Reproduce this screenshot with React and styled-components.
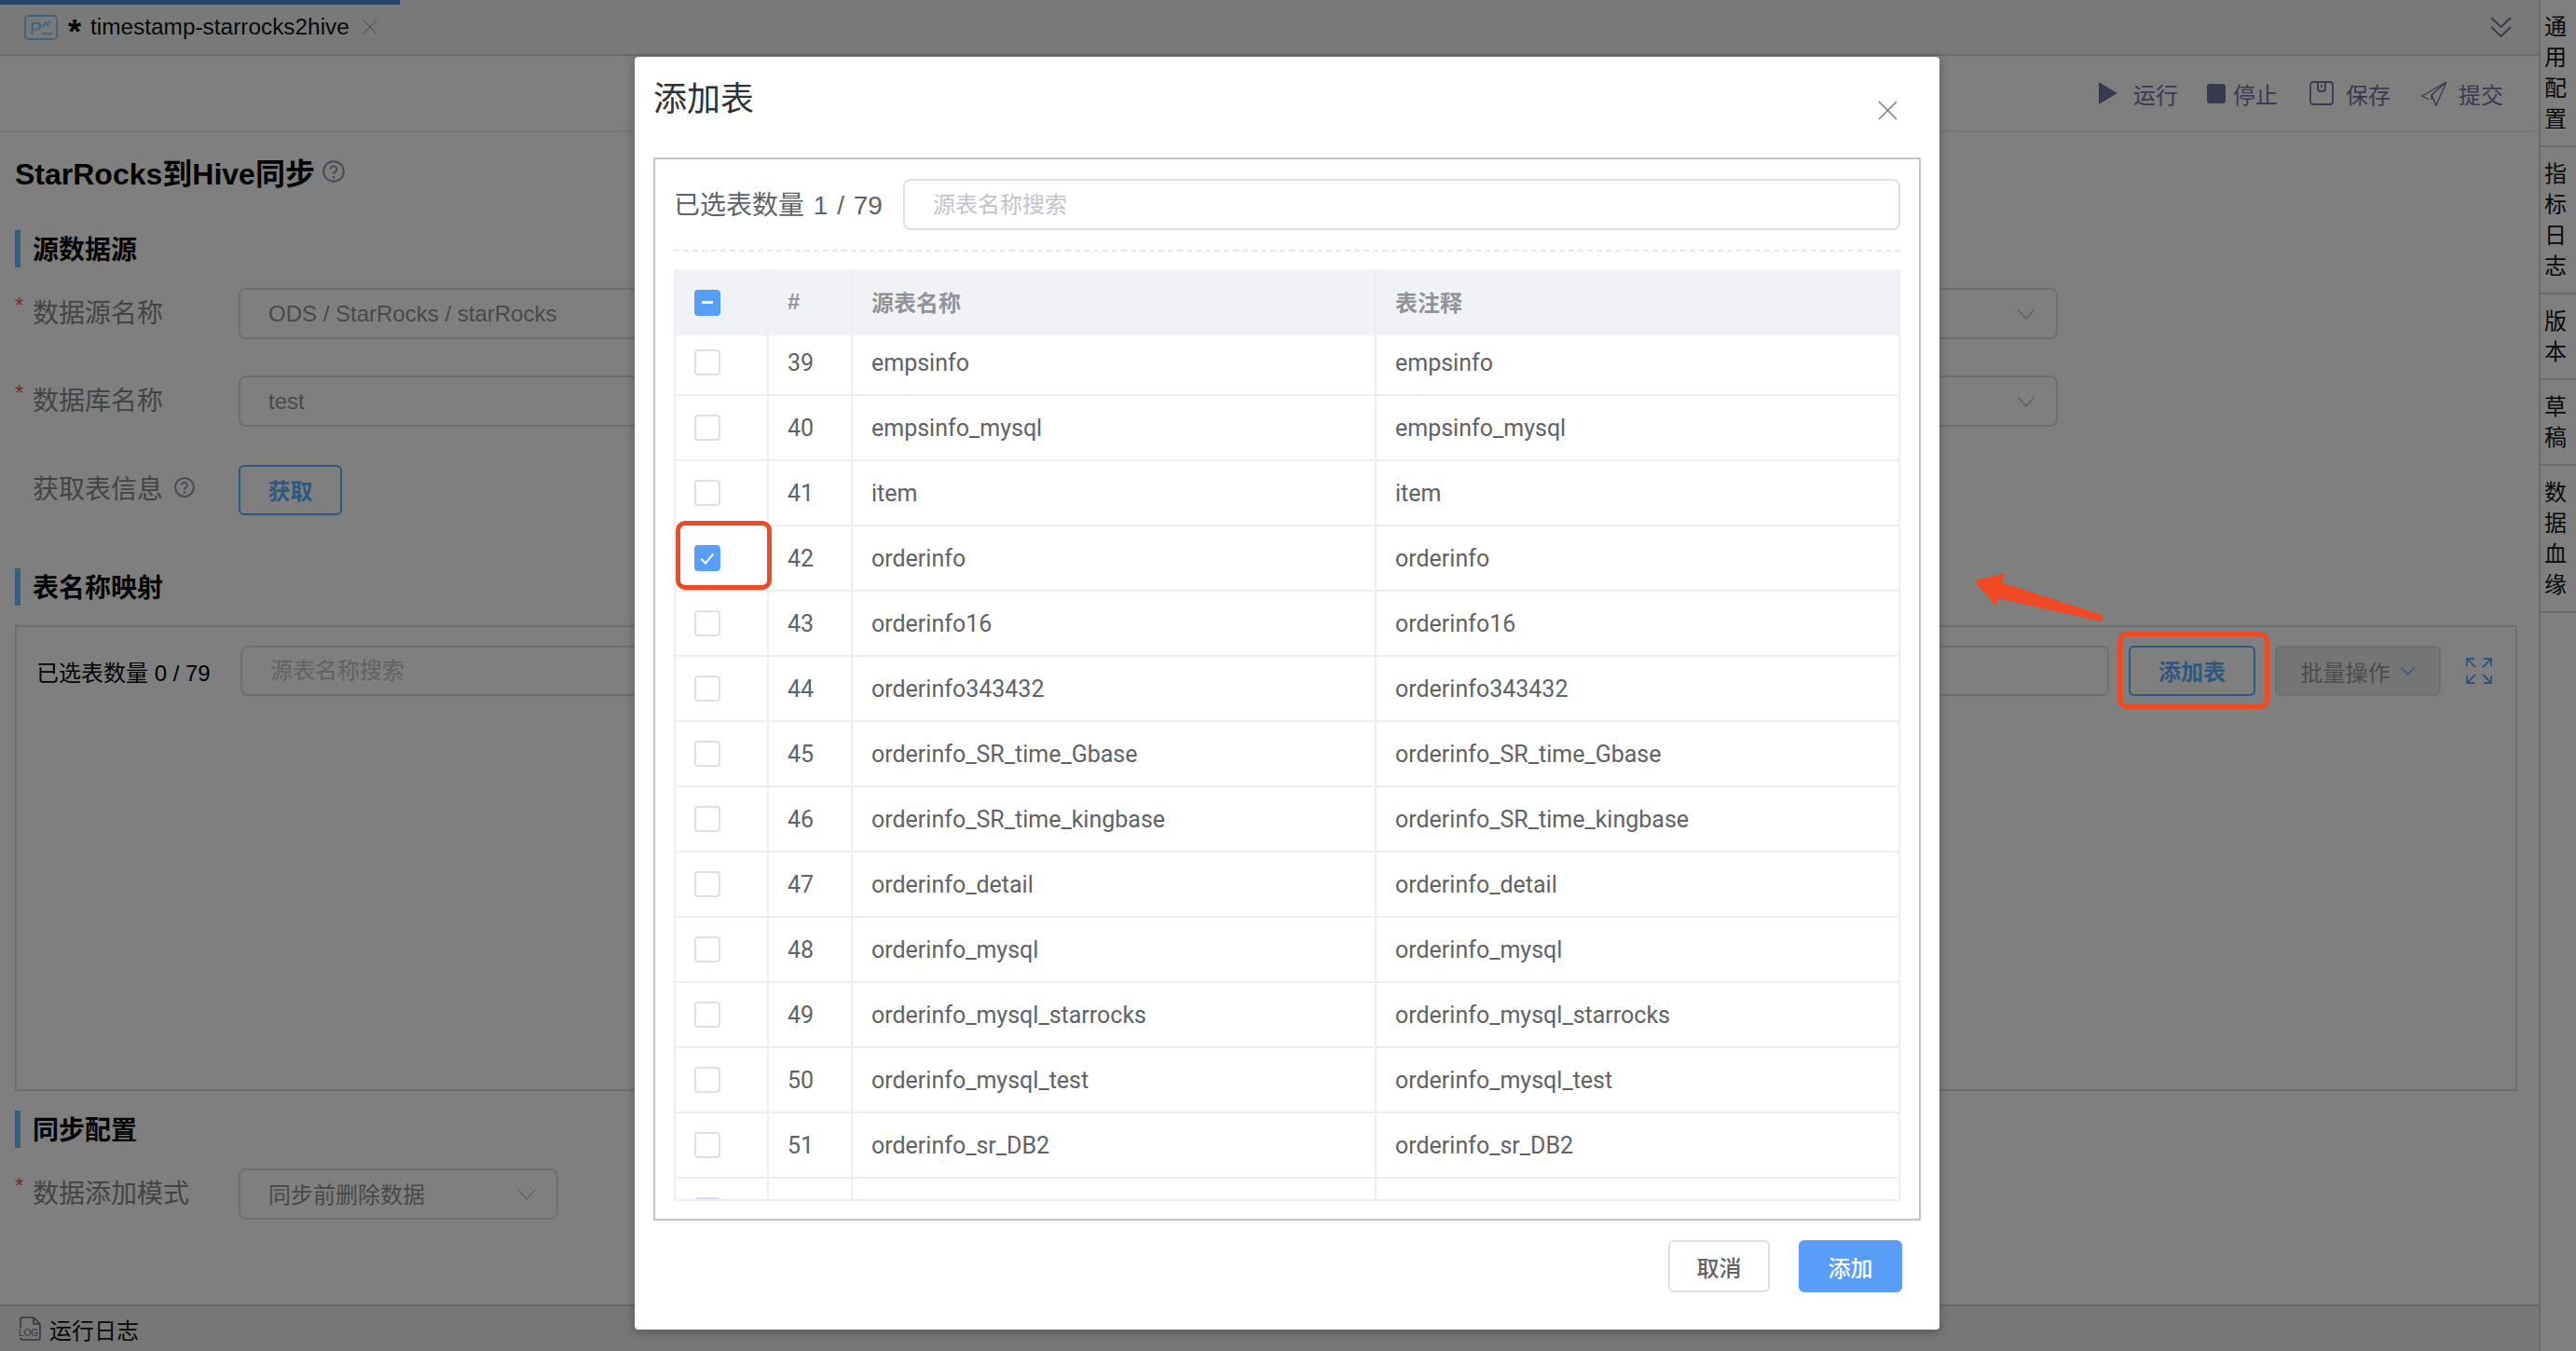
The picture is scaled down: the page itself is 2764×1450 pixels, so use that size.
import React from 'react';
import styled, { createGlobalStyle } from 'styled-components';

const rows = [
  [39, 'empsinfo'],
  [40, 'empsinfo_mysql'],
  [41, 'item'],
  [42, 'orderinfo'],
  [43, 'orderinfo16'],
  [44, 'orderinfo343432'],
  [45, 'orderinfo_SR_time_Gbase'],
  [46, 'orderinfo_SR_time_kingbase'],
  [47, 'orderinfo_detail'],
  [48, 'orderinfo_mysql'],
  [49, 'orderinfo_mysql_starrocks'],
  [50, 'orderinfo_mysql_test'],
  [51, 'orderinfo_sr_DB2'],
  ['', ''],
];

const railItems = ['通用配置', '指标日志', '版本', '草稿', '数据血缘'];

const Chevron = ({ w = 20, h = 12, color = '#c0c4cc' }) => (
  <svg width={w} height={h} viewBox="0 0 20 12" fill="none" preserveAspectRatio="none">
    <path d="M1 1l9 10 9-10" stroke={color} strokeWidth="1.5" />
  </svg>
);

const Help = ({ size, color }) => (
  <svg width={size} height={size} viewBox="0 0 24 24" fill="none">
    <circle cx="12" cy="12" r="10.800" stroke={color} strokeWidth="2" />
    <path d="M8.800 9.400a3.200 3.200 0 1 1 5 2.700c-1.200.8-1.800 1.400-1.800 2.900" stroke={color} strokeWidth="2" />
    <circle cx="12" cy="18" r="1.300" fill={color} />
  </svg>
);

const Cross = ({ size, color, weight = 1.5 }) => (
  <svg width={size} height={size} viewBox="0 0 20 20" fill="none">
    <path d="M1 1l18 18M19 1L1 19" stroke={color} strokeWidth={weight} />
  </svg>
);

const App = () => (
  <>
    <GlobalStyle />
    <Screen>
      <Main>
        <TabBar>
          <Progress />
          <TabIcon width="36" height="27" viewBox="0 0 36 27" fill="none">
            <rect x="1" y="1" width="34" height="25" rx="4" stroke="#7cc6ff" strokeWidth="1.800" />
            <text x="6" y="21" fontSize="19" fontFamily="Liberation Sans" fill="#7cc6ff">P</text>
            <path d="M20 13l3-5 2 3 3-5M19 20h11" stroke="#7cc6ff" strokeWidth="1.500" />
          </TabIcon>
          <TabStar>*</TabStar>
          <TabTitle>timestamp-starrocks2hive</TabTitle>
          <Cross size={16} color="#8a8a8a" weight={1.2} />
          <Collapse width="23" height="22" viewBox="0 0 23 22" fill="none">
            <path d="M1 1l10.500 10L22 1M1 11l10.500 10L22 11" stroke="#6f7396" strokeWidth="1.800" />
          </Collapse>
        </TabBar>

        <Toolbar>
          <Action $gap={17}>
            <svg width="20" height="24" viewBox="0 0 20 24"><path d="M0 0l20 12L0 24z" fill="#70749f" /></svg>
            运行
          </Action>
          <Action $gap={8} $left={31}>
            <svg width="20" height="21" viewBox="0 0 20 21"><rect width="20" height="21" rx="3" fill="#70749f" /></svg>
            停止
          </Action>
          <Action $gap={13} $left={34}>
            <svg width="26" height="26" viewBox="0 0 26 26" fill="none">
              <rect x="1" y="1" width="24" height="24" rx="3" stroke="#70749f" strokeWidth="1.800" />
              <path d="M9 1v7a3 3 0 0 0 3 3h2a3 3 0 0 0 3-3V1M13 4v3" stroke="#70749f" strokeWidth="1.800" />
            </svg>
            保存
          </Action>
          <Action $gap={12} $left={33}>
            <svg width="28" height="27" viewBox="0 0 28 27" fill="none">
              <path d="M27 1L1 16l7 4M27 1L16 26l-5-11zM27 1L11 15v5" stroke="#70749f" strokeWidth="1.400" />
            </svg>
            提交
          </Action>
        </Toolbar>

        <Content>
          <PageTitle>
            StarRocks到Hive同步
            <Help size={24} color="#8f95ab" />
          </PageTitle>

          <SectionHead $top={40}>源数据源</SectionHead>
          <FormRow $top={22}>
            <Label $required>数据源名称</Label>
            <Select>
              ODS / StarRocks / starRocks
              <Chevron />
            </Select>
          </FormRow>
          <FormRow $top={39}>
            <Label $required>数据库名称</Label>
            <Select>
              test
              <Chevron />
            </Select>
          </FormRow>
          <FormRow $top={40}>
            <Label>
              获取表信息
              <Help size={22} color="#8f95ab" />
            </Label>
            <FetchButton>获取</FetchButton>
          </FormRow>

          <SectionHead $top={57}>表名称映射</SectionHead>
          <MappingPanel>
            <MappingBar>
              <MappingCount>已选表数量 0 / 79</MappingCount>
              <MappingSearch>源表名称搜索</MappingSearch>
              <AddTableButton>添加表</AddTableButton>
              <BatchButton>
                批量操作
                <Chevron w={17} h={10} color="#7ba8e4" />
              </BatchButton>
              <ExpandIcon width="28" height="28" viewBox="0 0 28 28" fill="none">
                <path
                  d="M1 9V1h8M1 1l9 9M19 1h8v8M27 1l-9 9M1 19v8h8M1 27l9-9M27 19v8h-8M27 27l-9-9"
                  stroke="#62a8f5"
                  strokeWidth="1.800"
                />
              </ExpandIcon>
            </MappingBar>
          </MappingPanel>

          <SectionHead $top={21}>同步配置</SectionHead>
          <FormRow $top={22}>
            <Label $required>数据添加模式</Label>
            <Select $narrow>
              <SelectText>同步前删除数据</SelectText>
              <Chevron />
            </Select>
          </FormRow>
        </Content>

        <LogBar>
          <svg width="24" height="26" viewBox="0 0 24 26" fill="none">
            <path d="M4 1h12l7 7v15a2 2 0 0 1-2 2H4" stroke="#6a6a6a" strokeWidth="1.600" />
            <path d="M4 1a2 2 0 0 0-2 2v9M16 1v7h7M2 23a2 2 0 0 0 2 2" stroke="#6a6a6a" strokeWidth="1.600" />
            <text x="0" y="21" fontSize="10" fontFamily="Liberation Sans" fill="#6a6a6a">LOG</text>
          </svg>
          运行日志
        </LogBar>
      </Main>

      <Rail>
        {railItems.map(item => (
          <RailItem key={item}>{item}</RailItem>
        ))}
      </Rail>

      <Mask />

      <Modal>
        <ModalHead>
          <ModalTitle>添加表</ModalTitle>
          <ModalClose>
            <Cross size={21} color="#7a7d85" />
          </ModalClose>
        </ModalHead>

        <PickerBox>
          <PickerBar>
            <PickerCount>已选表数量 1 / 79</PickerCount>
            <PickerSearch>源表名称搜索</PickerSearch>
          </PickerBar>
          <DashedLine />
          <Table>
            <HeadRow>
              <HeadCell>
                <CheckBox $on>
                  <IndeterminateMark />
                </CheckBox>
              </HeadCell>
              <HeadCell>#</HeadCell>
              <HeadCell>源表名称</HeadCell>
              <HeadCell>表注释</HeadCell>
            </HeadRow>
            <TableBody>
              <ScrolledRows>
                {rows.map(([num, name], i) => (
                  <Row key={i}>
                    <Cell>
                      <CheckBox $on={num === 42}>
                        {num === 42 && (
                          <svg width="16" height="13" viewBox="0 0 16 13" fill="none">
                            <path d="M1.500 7l4.500 4.500L14.500 1.500" stroke="#fff" strokeWidth="2" />
                          </svg>
                        )}
                      </CheckBox>
                    </Cell>
                    <Cell>{num}</Cell>
                    <Cell>{name}</Cell>
                    <Cell>{name}</Cell>
                  </Row>
                ))}
              </ScrolledRows>
            </TableBody>
          </Table>
        </PickerBox>

        <ModalFoot>
          <CancelButton>取消</CancelButton>
          <ConfirmButton>添加</ConfirmButton>
        </ModalFoot>
      </Modal>

      <CheckHighlight />
      <ButtonHighlight />
      <ArrowMark width="140" height="56" viewBox="0 0 140 56">
        <path d="M0 8L35 0 29 10 138 45 137 52 25 27 24 36z" fill="#f04a24" />
      </ArrowMark>
    </Screen>
  </>
);

const GlobalStyle = createGlobalStyle`
  html, body {
    margin: 0;
    padding: 0;
    background: #fff;
  }
  * {
    box-sizing: border-box;
  }
  body {
    font-family: "Liberation Sans", "Noto Sans CJK SC", sans-serif;
  }
`;

const Screen = styled.div`
  position: relative;
  display: flex;
  width: 2764px;
  height: 1450px;
  overflow: hidden;
  background: #fff;
`;

const Main = styled.div`
  display: flex;
  flex-direction: column;
  width: 2724px;
  height: 100%;
`;

const TabBar = styled.div`
  position: relative;
  display: flex;
  align-items: center;
  flex: none;
  height: 60px;
  padding: 0 29px 0 26px;
  background: #f2f2f2;
  border-bottom: 2px solid #d6d6d6;
`;

const Progress = styled.div`
  position: absolute;
  top: 0;
  left: 0;
  width: 429px;
  height: 5px;
  background: #4c84d0;
`;

const TabIcon = styled.svg`
  flex: none;
  margin-right: 11px;
`;

const TabStar = styled.span`
  width: 24px;
  margin-top: 12px;
  font-size: 36px;
  font-weight: 700;
  line-height: 30px;
  color: #000;
`;

const TabTitle = styled.span`
  margin-right: 14px;
  font-size: 24.400px;
  color: #111;
`;

const Collapse = styled.svg`
  margin-left: auto;
`;

const Toolbar = styled.div`
  display: flex;
  align-items: center;
  justify-content: flex-end;
  flex: none;
  height: 82px;
  padding-right: 38px;
  border-bottom: 2px solid #ededed;
`;

const Action = styled.div`
  display: flex;
  align-items: center;
  gap: ${props => props.$gap}px;
  margin-left: ${props => props.$left || 0}px;
  font-size: 24px;
  color: #70749f;
`;

const Content = styled.div`
  flex: 1;
  padding: 21px 23px 0 16px;
`;

const PageTitle = styled.div`
  display: flex;
  align-items: center;
  gap: 8px;
  height: 44px;
  padding-bottom: 2px;
  font-size: 32px;
  font-weight: 700;
  color: #000;
`;

const SectionHead = styled.div`
  display: flex;
  align-items: center;
  height: 40px;
  margin-top: ${props => props.$top}px;
  padding: 0 0 3px 13px;
  border-left: 6px solid #66c0ff;
  font-size: 28px;
  font-weight: 700;
  color: #000;
`;

const FormRow = styled.div`
  display: flex;
  align-items: center;
  height: 55px;
  margin-top: ${props => props.$top}px;
  padding-right: 493px;
`;

const Label = styled.div`
  position: relative;
  display: flex;
  align-items: center;
  gap: 12px;
  flex: none;
  width: 240px;
  padding: 0 0 5px 19px;
  font-size: 28px;
  color: #85888d;
  &::before {
    content: ${props => (props.$required ? '"*"' : 'none')};
    position: absolute;
    top: 0;
    left: 0;
    font-size: 24px;
    color: #e0605a;
  }
`;

const Select = styled.div`
  display: flex;
  align-items: center;
  justify-content: space-between;
  flex: ${props => (props.$narrow ? 'none' : 1)};
  width: ${props => (props.$narrow ? '343px' : 'auto')};
  height: 55px;
  padding: 0 22px 0 30px;
  border: 2px solid #dcdfe6;
  border-radius: 8px;
  font-size: 24px;
  color: #909399;
`;

const SelectText = styled.span`
  padding-bottom: 2px;
`;

const FetchButton = styled.div`
  display: flex;
  align-items: center;
  justify-content: center;
  width: 111px;
  height: 54px;
  border: 2px solid #5cb0ff;
  border-radius: 6px;
  font-size: 24px;
  font-weight: 700;
  color: #5cb0ff;
`;

const MappingPanel = styled.div`
  height: 500px;
  margin-top: 21px;
  padding: 20px 25px 0 21px;
  border: 2px solid #dcdfe6;
`;

const MappingBar = styled.div`
  display: flex;
  align-items: center;
  height: 54px;
`;

const MappingCount = styled.div`
  flex: none;
  width: 219px;
  font-size: 24px;
  color: #000;
`;

const MappingSearch = styled.div`
  display: flex;
  align-items: center;
  flex: 1;
  height: 54px;
  padding: 0 0 5px 30px;
  border: 2px solid #dcdfe6;
  border-radius: 8px;
  font-size: 24px;
  color: #c0c4cc;
`;

const AddTableButton = styled.div`
  display: flex;
  align-items: center;
  justify-content: center;
  flex: none;
  width: 136px;
  height: 54px;
  margin-left: 21px;
  padding-bottom: 2px;
  border: 2px solid #5cb0ff;
  border-radius: 6px;
  font-size: 24px;
  font-weight: 700;
  color: #5cb0ff;
`;

const BatchButton = styled.div`
  display: flex;
  align-items: center;
  justify-content: center;
  gap: 10px;
  flex: none;
  width: 178px;
  height: 54px;
  margin-left: 21px;
  border: 2px solid #dcdfe6;
  border-radius: 6px;
  background: #ebebeb;
  font-size: 24px;
  color: #999;
`;

const ExpandIcon = styled.svg`
  flex: none;
  margin-left: 27px;
`;

const LogBar = styled.div`
  display: flex;
  align-items: center;
  gap: 9px;
  flex: none;
  height: 50px;
  padding-left: 20px;
  background: #eee;
  border-top: 2px solid #d4d4d4;
  font-size: 24px;
  color: #111;
`;

const Rail = styled.div`
  flex: none;
  width: 40px;
  border-left: 2px solid #d6d6d6;
`;

const RailItem = styled.div`
  padding: 12px 10px 12px 4px;
  border-bottom: 2px solid #d6d6d6;
  font-size: 24px;
  line-height: 33px;
  color: #111;
`;

const Mask = styled.div`
  position: absolute;
  inset: 0;
  background: rgba(0, 0, 0, 0.5);
`;

const Modal = styled.div`
  position: absolute;
  top: 61px;
  left: 681px;
  display: flex;
  flex-direction: column;
  width: 1400px;
  height: 1366px;
  padding: 0 20px;
  background: #fff;
  border-radius: 4px;
  box-shadow: 0 2px 12px rgba(0, 0, 0, 0.3);
`;

const ModalHead = styled.div`
  display: flex;
  align-items: flex-start;
  justify-content: space-between;
  flex: none;
  height: 108px;
  padding-top: 24px;
`;

const ModalTitle = styled.div`
  font-size: 36px;
  line-height: 44px;
  color: #303133;
`;

const ModalClose = styled.div`
  margin: 23px 25px 0 0;
  line-height: 0;
`;

const PickerBox = styled.div`
  display: flex;
  flex-direction: column;
  flex: none;
  height: 1141px;
  padding: 21px 20px 19px;
  border: 2px solid #c0c4cc;
`;

const PickerBar = styled.div`
  display: flex;
  align-items: center;
  flex: none;
  height: 55px;
`;

const PickerCount = styled.div`
  flex: none;
  width: 246px;
  padding-bottom: 3px;
  font-size: 28px;
  word-spacing: 2px;
  color: #606266;
`;

const PickerSearch = styled.div`
  display: flex;
  align-items: center;
  flex: 1;
  height: 55px;
  padding: 0 0 5px 30px;
  border: 2px solid #dcdfe6;
  border-radius: 8px;
  font-size: 24px;
  color: #c0c4cc;
`;

const DashedLine = styled.div`
  flex: none;
  margin: 21px 0 19px;
  border-top: 2px dashed #e4e7ed;
`;

const Table = styled.div`
  display: flex;
  flex-direction: column;
  flex: 1;
  min-height: 0;
  border-left: 2px solid #ebeef5;
  border-bottom: 2px solid #ebeef5;
`;

const HeadRow = styled.div`
  display: grid;
  grid-template-columns: 100px 90px 562px 1fr;
  flex: none;
  height: 71px;
  background: #f0f2f5;
`;

const HeadCell = styled.div`
  display: flex;
  align-items: center;
  padding-left: 20px;
  border-right: 2px solid #ebeef5;
  font-size: 24px;
  font-weight: 700;
  color: #909399;
  &:not(:first-child) {
    padding-bottom: 2px;
  }
`;

const TableBody = styled.div`
  flex: 1;
  min-height: 0;
  overflow: hidden;
`;

const ScrolledRows = styled.div`
  margin-top: -5px;
`;

const Row = styled.div`
  display: grid;
  grid-template-columns: 100px 90px 562px 1fr;
  height: 70px;
  border-bottom: 2px solid #ebeef5;
`;

const Cell = styled.div`
  display: flex;
  align-items: center;
  padding-left: 20px;
  border-right: 2px solid #ebeef5;
  font-family: Roboto, "Liberation Sans", sans-serif;
  font-size: 25px;
  color: #606266;
`;

const CheckBox = styled.span`
  display: flex;
  align-items: center;
  justify-content: center;
  width: 28px;
  height: 28px;
  border: 2px solid ${props => (props.$on ? '#589ef8' : '#dcdfe6')};
  border-radius: 4px;
  background: ${props => (props.$on ? '#589ef8' : '#fff')};
`;

const IndeterminateMark = styled.span`
  width: 12px;
  height: 3px;
  background: #fff;
`;

const ModalFoot = styled.div`
  display: flex;
  justify-content: flex-end;
  gap: 31px;
  flex: 1;
  padding: 21px 40px 0 0;
  margin-right: -20px;
`;

const CancelButton = styled.div`
  display: flex;
  align-items: center;
  justify-content: center;
  width: 109px;
  height: 56px;
  border: 2px solid #dcdfe6;
  border-radius: 6px;
  font-size: 24px;
  font-weight: 500;
  color: #606266;
`;

const ConfirmButton = styled.div`
  display: flex;
  align-items: center;
  justify-content: center;
  width: 111px;
  height: 56px;
  border-radius: 6px;
  background: #589ef8;
  font-size: 24px;
  font-weight: 500;
  color: #fff;
`;

const CheckHighlight = styled.div`
  position: absolute;
  top: 559px;
  left: 725px;
  width: 103px;
  height: 74px;
  border: 5px solid #f04a24;
  border-radius: 10px;
`;

const ButtonHighlight = styled.div`
  position: absolute;
  top: 678px;
  left: 2272px;
  width: 163px;
  height: 83px;
  border: 5px solid #f04a24;
  border-radius: 10px;
`;

const ArrowMark = styled.svg`
  position: absolute;
  top: 615px;
  left: 2118px;
`;

export default App;
